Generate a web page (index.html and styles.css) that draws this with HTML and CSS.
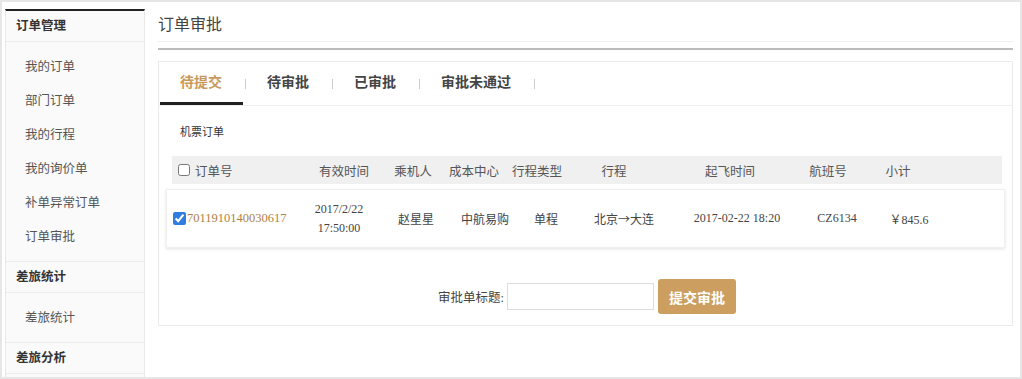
FILE: index.html
```html
<html>
<head>
<title>订单审批</title>
<meta charset="utf-8">
<link rel="stylesheet" href="styles.css">
</head>
<body>
<div class="frame">

<!-- left menu -->
<div class="sidebar">
  <div class="side-head">订单管理</div>
  <ul class="side-list">
    <li>我的订单</li>
    <li>部门订单</li>
    <li>我的行程</li>
    <li>我的询价单</li>
    <li>补单异常订单</li>
    <li>订单审批</li>
  </ul>
  <div class="side-head">差旅统计</div>
  <ul class="side-list">
    <li>差旅统计</li>
  </ul>
  <div class="side-head">差旅分析</div>
</div>

<!-- content -->
<div class="main">
  <div class="page-title">订单审批</div>
  <div class="rule"></div>

  <div class="panel">
    <div class="tabs">
      <span class="tab active">待提交</span><span class="sep"></span>
      <span class="tab">待审批</span><span class="sep"></span>
      <span class="tab">已审批</span><span class="sep"></span>
      <span class="tab">审批未通过</span><span class="sep"></span>
    </div>

    <div class="panel-body">
      <div class="cat">机票订单</div>

      <div class="thead">
        <div class="c-first"><input type="checkbox" class="chk">订单号</div>
        <div>有效时间</div>
        <div>乘机人</div>
        <div>成本中心</div>
        <div>行程类型</div>
        <div>行程</div>
        <div>起飞时间</div>
        <div>航班号</div>
        <div>小计</div>
        <div></div>
      </div>

      <div class="trow">
        <div class="c-first"><input type="checkbox" class="chk" checked><span class="order-no">7011910140030617</span></div>
        <div class="two-line">2017/2/22<br>17:50:00</div>
        <div>赵星星</div>
        <div>中航易购</div>
        <div>单程</div>
        <div>北京<span class="cjk">→</span>大连</div>
        <div>2017-02-22 18:20</div>
        <div>CZ6134</div>
        <div><span class="cjk">￥</span>845.6</div>
        <div></div>
      </div>

      <div class="submit-bar">
        <label>审批单标题:</label>
        <input type="text" class="title-input">
        <button type="button" class="btn-submit">提交审批</button>
      </div>
    </div>
  </div>
</div>

</div>
</body>
</html>
```

FILE: styles.css
```css
body { margin:0; background:#fff; color:#333; font-family:"Liberation Serif", "Noto Sans CJK SC", serif; }
ul { list-style:none; margin:0; padding:0; }
.cjk { font-family:"Noto Sans CJK SC", sans-serif; }

.frame { width:1022px; height:379px; box-sizing:border-box; border:2px solid #e6e6e6; display:flex; align-items:stretch; padding:7px 7px 0 3px; }

/* sidebar */
.sidebar { width:140px; box-sizing:border-box; border-top:2px solid #222; border-left:1px solid #e8e8e8; border-right:1px solid #e8e8e8; background:#fafafa; }
.side-head { height:30px; line-height:30px; padding-left:10px; font-size:12.5px; font-weight:bold; color:#333; border-bottom:1px solid #ececec; }
.side-list { padding:8px 0 7px; border-bottom:1px solid #ececec; }
.side-list li { height:34px; line-height:34px; padding-left:19px; font-size:12.5px; color:#555; }

/* main area */
.main { flex:1; margin-left:13px; }
.page-title { height:32px; line-height:31px; font-size:16px; color:#444; border-bottom:1px solid #eee; }
.rule { margin-top:6px; height:2px; background:#bbb; }

.panel { margin-top:11px; border:1px solid #ebebeb; }
.tabs { display:flex; align-items:center; padding-left:1px; border-bottom:1px solid #eee; }
.tab { padding:1px 21px 0 20px; height:39px; line-height:39px; border-bottom:3px solid transparent; font-size:14px; font-weight:bold; color:#444; }
.tab.active { color:#c9995c; border-bottom-color:#222; }
.sep { width:1px; height:10px; background:#ccc; margin:0 1px 0 2px; }

.panel-body { padding:18px 10px 11px 13px; }
.cat { margin-left:8px; height:16px; line-height:16px; font-size:11px; color:#333; }

.thead, .trow { display:grid; align-items:center; font-size:12px; text-align:center; }
.thead { margin-top:16px; height:28px; background:#f0f0f0; color:#555; font-size:12.5px;
  grid-template-columns:134px 76px 62px 60px 66px 88px 144px 52px 88px auto; }
.trow { margin:5px -3px 0 -6px; height:59px; box-sizing:border-box; padding-left:6px; background:#fff; color:#444;
  border:1px solid #f0f0f0; box-shadow:0 1px 3px rgba(0,0,0,.12);
  grid-template-columns:126px 80px 74px 64px 58px 98px 128px 72px 72px auto; }
.thead .c-first { padding-left:6px; }
.c-first { display:flex; align-items:center; text-align:left; }
.chk { width:12px; height:12px; margin:0 5px 0 0; accent-color:#2f7de1; }
.trow .chk { width:13px; height:13px; margin-right:1px; }
.order-no { color:#ad7f45; font-size:12.5px; }
.two-line { line-height:19px; }

.submit-bar { margin-top:31px; display:flex; justify-content:center; align-items:center; font-size:12.5px; color:#444; }
.title-input { width:147px; height:27px; box-sizing:border-box; border:1px solid #ddd; margin:0 4px 0 3px; }
.btn-submit { width:78px; height:35px; border:none; border-radius:3px; background:#cc9f60; color:#fff; font-size:14px; font-weight:bold; font-family:"Liberation Serif", "Noto Sans CJK SC", serif; }
```
